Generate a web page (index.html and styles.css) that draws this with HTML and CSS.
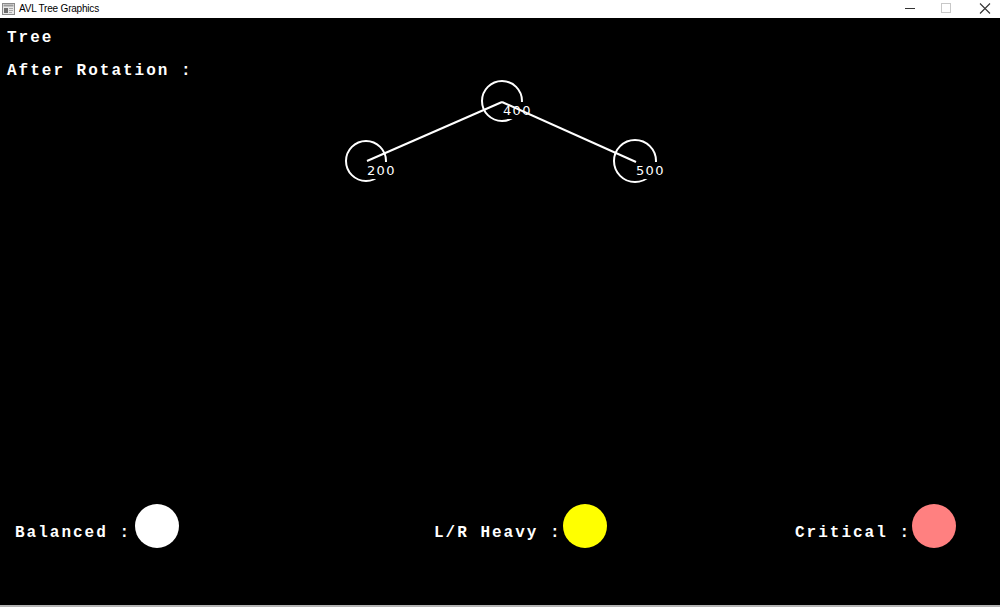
FILE: index.html
```html
<!DOCTYPE html>
<html>
<head>
<meta charset="utf-8">
<title>AVL Tree Graphics</title>
<link rel="stylesheet" href="styles.css">
</head>
<body>
<div class="window">
  <div class="titlebar">
    <svg class="app-icon" width="13" height="12" viewBox="0 0 13 12">
      <rect x="0.5" y="0.5" width="12" height="11" fill="#e8e8e8" stroke="#8a8a8a"/>
      <rect x="1.5" y="1.5" width="10" height="2" fill="#9a9a9a"/>
      <rect x="2" y="5" width="4" height="5" fill="#6d6d6d"/>
      <rect x="7" y="5" width="4" height="1" fill="#a8a8a8"/>
      <rect x="7" y="7" width="4" height="1" fill="#a8a8a8"/>
      <rect x="7" y="9" width="3" height="1" fill="#a8a8a8"/>
    </svg>
    <span class="title">AVL Tree Graphics</span>
    <div class="controls">
      <svg class="ctl" width="40" height="18" viewBox="0 0 40 18"><line x1="18" y1="8.5" x2="28" y2="8.5" stroke="#333" stroke-width="1"/></svg>
      <svg class="ctl" width="38" height="18" viewBox="0 0 38 18"><rect x="14.5" y="3.5" width="9" height="9" fill="none" stroke="#c8c8c8"/></svg>
      <svg class="ctl" width="38" height="18" viewBox="0 0 38 18"><path d="M15 3.5 L25 13.5 M25 3.5 L15 13.5" stroke="#333" stroke-width="1.1"/></svg>
    </div>
  </div>
  <div class="canvas">
    <svg class="tree" width="1000" height="587" viewBox="0 18 1000 587">
      <g fill="none" stroke="#fff" stroke-width="2">
        <circle cx="502" cy="101" r="20"/>
        <circle cx="366" cy="161" r="20"/>
        <circle cx="635" cy="161" r="21"/>
      </g>
      <g fill="#000">
        <rect x="502" y="102" width="32" height="17"/>
        <rect x="367" y="162" width="32" height="17"/>
        <rect x="636" y="162" width="32" height="17"/>
      </g>
      <g class="node-text" fill="#fff">
        <text x="503" y="115">400</text>
        <text x="367" y="175">200</text>
        <text x="636" y="175">500</text>
      </g>
      <g stroke="#fff" stroke-width="2">
        <line x1="502" y1="102" x2="367" y2="161"/>
        <line x1="502" y1="102" x2="636" y2="162"/>
      </g>
    </svg>
    <div class="heading">Tree</div>
    <div class="heading sub">After Rotation :</div>
    <div class="legend">
      <div class="item"><span class="label">Balanced :</span><span class="dot white wide"></span></div>
      <div class="item"><span class="label">L/R Heavy :</span><span class="dot yellow"></span></div>
      <div class="item"><span class="label">Critical :</span><span class="dot pink"></span></div>
    </div>
  </div>
  <div class="bottom-edge"></div>
</div>
</body>
</html>
```
FILE: styles.css
```css
html, body {
  margin: 0;
  padding: 0;
  background: #fff;
}
.window {
  width: 1000px;
  height: 607px;
  display: flex;
  flex-direction: column;
  overflow: hidden;
}
.titlebar {
  height: 18px;
  flex: 0 0 18px;
  background: #fff;
  display: flex;
  align-items: center;
}
.app-icon {
  margin-left: 2px;
  margin-top: -1px;
}
.title {
  margin-left: 4px;
  font-family: "Liberation Sans", Arial, sans-serif;
  font-size: 10px;
  letter-spacing: -0.2px;
  color: #000;
  margin-top: -1px;
}
.controls {
  margin-left: auto;
  display: flex;
  margin-right: -3px;
}
.ctl {
  display: block;
}
.canvas {
  flex: 1 1 auto;
  background: #000;
  position: relative;
  display: flex;
  flex-direction: column;
  padding-left: 7px;
}
.tree {
  position: absolute;
  left: 0;
  top: 0;
}
.node-text {
  font-family: "DejaVu Sans", sans-serif;
  font-size: 13px;
  letter-spacing: 1.3px;
}
.heading {
  position: relative;
  font-family: "Liberation Mono", "Courier New", monospace;
  font-weight: bold;
  font-size: 16px;
  letter-spacing: 2px;
  color: #fff;
  line-height: 18px;
  margin-top: 11px;
}
.heading.sub {
  margin-top: 15px;
}
.legend {
  margin-top: auto;
  margin-bottom: 57px;
  display: grid;
  grid-template-columns: 419px 361px auto;
  padding-left: 8px;
  position: relative;
}
.item {
  display: flex;
  align-items: flex-start;
}
.label {
  font-family: "Liberation Mono", "Courier New", monospace;
  font-weight: bold;
  font-size: 16px;
  letter-spacing: 2px;
  color: #fff;
  line-height: 18px;
  margin-top: 20px;
  white-space: pre;
}
.dot {
  width: 44px;
  height: 44px;
  border-radius: 50%;
  margin-left: 1px;
}
.dot.wide {
  margin-left: 4px;
}
.white { background: #fff; }
.yellow { background: #ffff00; }
.pink { background: #ff8080; }
.bottom-edge {
  flex: 0 0 2px;
  background: #b4b4b4;
}
```
